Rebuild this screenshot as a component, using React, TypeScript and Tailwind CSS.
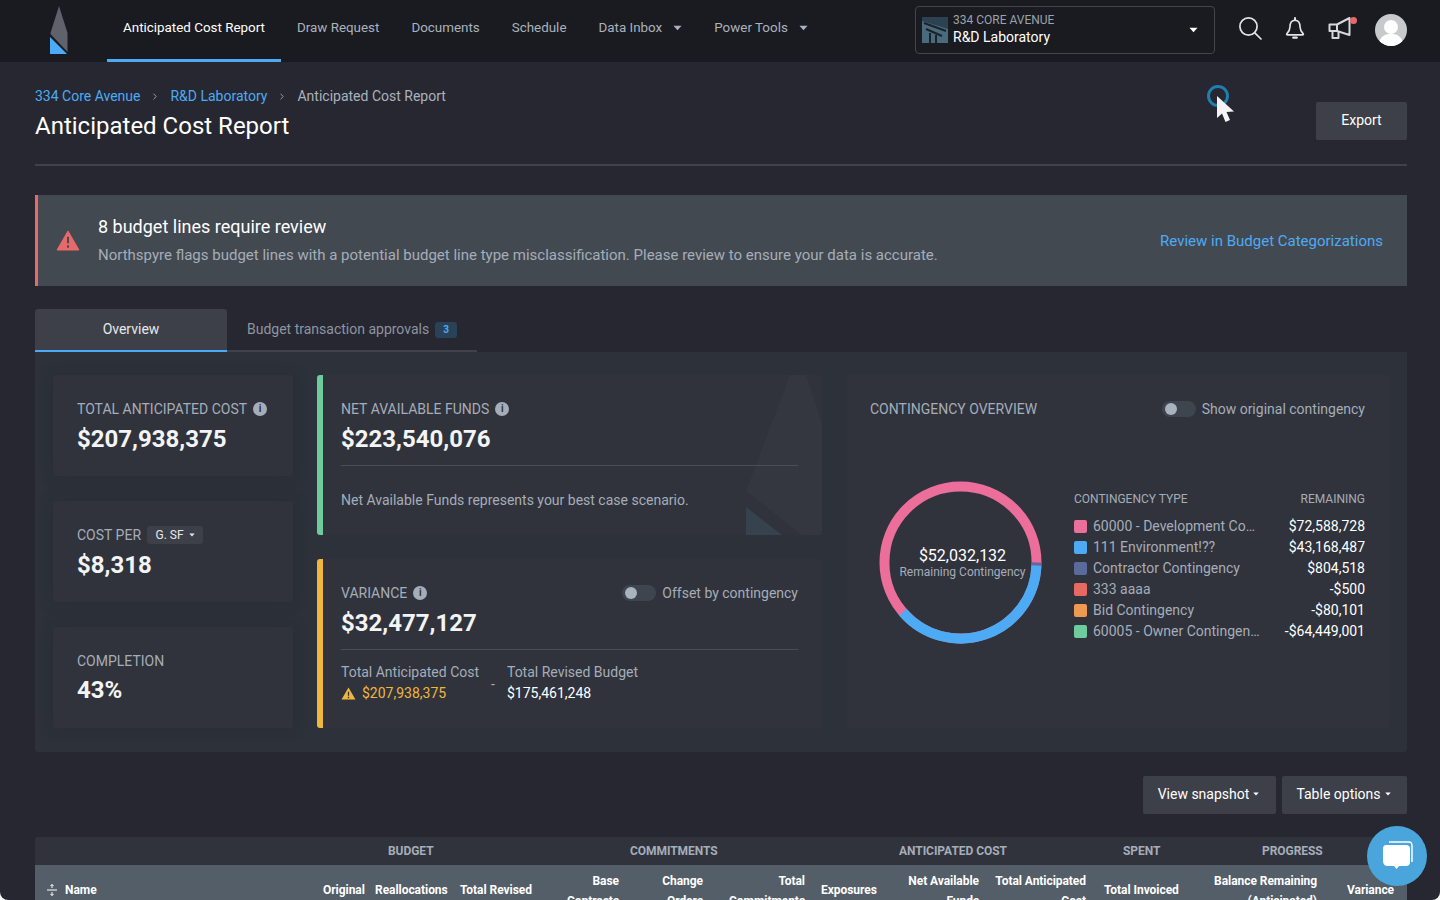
import { ChevronRight } from "lucide-react";

const font = { fontFamily: "Roboto, sans-serif" };

const navItems = ["Draw Request", "Documents", "Schedule"];

const legend = [
  { color: "bg-[#ec6f9b]", name: "60000 - Development Co…", value: "$72,588,728" },
  { color: "bg-[#4dabf5]", name: "111 Environment!??", value: "$43,168,487" },
  { color: "bg-[#5a6a9c]", name: "Contractor Contingency", value: "$804,518" },
  { color: "bg-[#e76a62]", name: "333 aaaa", value: "-$500" },
  { color: "bg-[#ef9a52]", name: "Bid Contingency", value: "-$80,101" },
  { color: "bg-[#6dcb9c]", name: "60005 - Owner Contingen…", value: "-$64,449,001" },
];

function Caret({ className }: { className: string }) {
  return (
    <svg viewBox="0 0 10 6" className={className} fill="currentColor">
      <path d="M0.5 0.5h9L5 5.5z" />
    </svg>
  );
}

function InfoDot() {
  return (
    <span className="ml-[6px] flex h-[14px] w-[14px] items-center justify-center rounded-full bg-[#a5adb9] text-[10px] font-bold leading-none text-[#30333c]">
      i
    </span>
  );
}

function Toggle() {
  return (
    <span className="flex h-[16px] w-[34px] items-center rounded-full bg-[#3f454e] pl-[3px]">
      <span className="h-[12px] w-[12px] rounded-full bg-[#a9b2bf]" />
    </span>
  );
}

function StatCard({ children }: { children: React.ReactNode }) {
  return (
    <div className="h-[101px] rounded-[3px] bg-[#30333c] px-[24px] pt-[25px] shadow-[0_0_14px_rgba(38,39,48,0.45)]">
      {children}
    </div>
  );
}

function Logo() {
  return (
    <svg viewBox="0 0 18 48" className="h-[48px] w-[18px]">
      <path d="M9 0 L17.5 27 L17.5 46 L0.5 28 L0.5 27 Z" fill="#5f626b" />
      <path d="M0 31 L17 48 L0 48 Z" fill="#4dabf5" />
    </svg>
  );
}

function Cursor() {
  return (
    <div className="absolute left-[1207px] top-[85px] h-[40px] w-[32px]">
      <span className="absolute left-0 top-0 h-[22px] w-[22px] rounded-full border-[3px] border-[#1f7fae]" />
      <svg viewBox="0 0 20 30" className="absolute left-[9px] top-[10px] h-[30px] w-[20px]">
        <path d="M1 1 L1 23 L6 18.5 L9.5 27 L14 25 L10.5 17 L18 16.5 Z" fill="#f4f4f4" />
      </svg>
    </div>
  );
}

function HeaderCell({ top, bottom, className }: { top: string; bottom?: string; className: string }) {
  return (
    <div className={`absolute text-right text-[12px] font-bold leading-[20px] tracking-[-0.05px] text-white ${className}`}>
      <div>{top}</div>
      {bottom && <div>{bottom}</div>}
    </div>
  );
}

export default function App() {
  return (
    <div style={font} className="relative h-[900px] overflow-hidden rounded-b-[8px] bg-[#262730] text-[14px] text-white">
      <header className="flex h-[62px] items-stretch bg-[#1a1b20]">
        <div className="ml-[50px] mr-[39px] flex items-center pb-[2px]">
          <Logo />
        </div>
        <nav className="flex w-[718px] items-stretch whitespace-nowrap text-[13.4px] text-[#aab2bd]">
          <a className="flex items-center border-b-[3px] border-[#4dabf5] px-[16px] pb-[3px] text-white">Anticipated Cost Report</a>
          {navItems.map((n) => (
            <a key={n} className="flex items-center px-[16px] pb-[6px]">
              {n}
            </a>
          ))}
          <a className="flex items-center gap-[11px] px-[16px] pb-[6px]">
            Data Inbox <Caret className="h-[6px] w-[9px]" />
          </a>
          <a className="flex items-center gap-[11px] px-[16px] pb-[6px]">
            Power Tools <Caret className="h-[6px] w-[9px]" />
          </a>
        </nav>
        <div className="ml-[90px] mt-[6px] flex h-[48px] w-[300px] items-center rounded-[4px] border border-[#42454d] pl-[6px] pr-[16px]">
          <svg viewBox="0 0 26 26" className="mr-[5px] h-[26px] w-[26px]">
            <rect width="26" height="26" fill="#2c4252" />
            <path d="M0 4 L26 12 L26 26 L0 26 Z" fill="#4a6a7e" />
            <path d="M2 6 L24 14 M4 12 L20 19 M8 16 V26 M14 18 V26" stroke="#1a2228" strokeWidth="2" />
          </svg>
          <div className="-mt-[2px] flex-1">
            <div className="text-[12px] leading-[17px] text-[#9aa2ad]">334 CORE AVENUE</div>
            <div className="text-[14px] leading-[17px] text-white">R&amp;D Laboratory</div>
          </div>
          <Caret className="h-[6px] w-[9px]" />
        </div>
        <div className="ml-[23px] flex items-center pb-[6px]">
          <svg viewBox="0 0 24 24" className="h-[24px] w-[24px]" fill="none" stroke="#e2e4e7" strokeWidth="1.7" strokeLinecap="round">
            <circle cx="10.5" cy="10.5" r="8.6" />
            <path d="M16.8 16.8 L23 23" />
          </svg>
          <svg viewBox="0 0 24 24" className="ml-[22px] h-[24px] w-[22px]" fill="none" stroke="#e2e4e7" strokeWidth="1.8" strokeLinejoin="round">
            <path d="M12 3.5 C7.5 3.5 6.5 7.5 6.5 11 C6.5 14.5 5 16.5 3 18.5 Q2.5 19.5 4 19.5 H20 Q21.5 19.5 21 18.5 C19 16.5 17.5 14.5 17.5 11 C17.5 7.5 16.5 3.5 12 3.5 Z" />
            <path d="M12 1 V3.5 M10 22.5 H14" strokeLinecap="round" strokeWidth="2.2" />
          </svg>
          <div className="relative ml-[22px] h-[24px] w-[26px]">
            <svg viewBox="0 0 26 24" className="h-[24px] w-[26px]" fill="none" stroke="#d5d8dc" strokeWidth="2" strokeLinejoin="round">
              <path d="M1.5 8.5 H9 L21.5 2 V19 L9 15 H1.5 Z" />
              <path d="M9 8.5 V15 M4.5 15 V22 H10.5 V15.5" />
            </svg>
            <span className="absolute right-[-3px] top-[1px] h-[7px] w-[7px] rounded-full bg-[#e76a6a]" />
          </div>
          <div className="relative ml-[21px] mt-[4px] h-[32px] w-[32px] overflow-hidden rounded-full bg-[#c8c9cb]">
            <span className="absolute left-[9px] top-[6px] h-[14px] w-[14px] rounded-full bg-white" />
            <span className="absolute left-[4px] top-[20px] h-[18px] w-[24px] rounded-t-[10px] bg-white" />
          </div>
        </div>
      </header>

      <main className="pl-[35px] pr-[33px]">
        <div className="flex h-[104px] items-start justify-between border-b-2 border-[#3f424a]">
          <div>
            <div className="mt-[25px] flex items-center text-[14px] leading-[18px] text-[#aab2bd]">
              <a className="text-[#4dabf5]">334 Core Avenue</a>
              <ChevronRight className="mx-[10px] h-[13px] w-[10px] text-[#aab2bd]" strokeWidth={2} />
              <a className="text-[#4dabf5]">R&amp;D Laboratory</a>
              <ChevronRight className="mx-[10px] h-[13px] w-[10px] text-[#aab2bd]" strokeWidth={2} />
              <span>Anticipated Cost Report</span>
            </div>
            <h1 className="mt-[6px] text-[24px] font-normal leading-[30px] text-white">Anticipated Cost Report</h1>
          </div>
          <button className="mt-[40px] h-[38px] w-[91px] rounded-[2px] bg-[#3d4049] pb-[2px] text-[14px]">Export</button>
        </div>

        <section className="mt-[29px] flex h-[91px] items-center justify-between border-l-[3px] border-[#e76a6a] bg-[#434951] pl-[18px] pr-[24px]">
          <div className="flex items-center">
            <svg viewBox="0 0 24 22" className="h-[21px] w-[24px]">
              <path d="M12 1 L23.5 21 H0.5 Z" fill="#e76a6a" stroke="#e76a6a" strokeWidth="1" strokeLinejoin="round" />
              <path d="M12 7 V14 M12 16 V18.5" stroke="#434951" strokeWidth="2" />
            </svg>
            <div className="ml-[18px]">
              <div className="text-[18px] leading-[22px] text-white">8 budget lines require review</div>
              <div className="mt-[7px] text-[15px] leading-[20px] text-[#a5adb9]">
                Northspyre flags budget lines with a potential budget line type misclassification. Please review to ensure your data is accurate.
              </div>
            </div>
          </div>
          <a className="mt-[2px] text-[15px] text-[#4dabf5]">Review in Budget Categorizations</a>
        </section>

        <div className="mt-[23px] flex h-[43px] w-[442px] border-b-2 border-[#3f424a] text-[14px]">
          <div className="flex h-[43px] w-[192px] items-center justify-center rounded-t-[3px] border-b-2 border-[#4dabf5] bg-[#3d4049] text-[#e6e8eb]">
            Overview
          </div>
          <div className="flex flex-1 items-center pl-[20px] text-[#8d95a1]">
            Budget transaction approvals
            <span className="ml-[6px] flex h-[16px] w-[22px] items-center justify-center rounded-[3px] bg-[#2a4257] text-[10px] font-bold text-[#4dabf5]">3</span>
          </div>
        </div>

        <section className="flex h-[400px] gap-[24px] rounded-b-[3px] bg-[#2c313a] px-[18px] pt-[23px]">
          <div className="flex w-[240px] flex-col gap-[25px]">
            <StatCard>
              <div className="flex h-[18px] items-center text-[#a5adb9]">
                TOTAL ANTICIPATED COST <InfoDot />
              </div>
              <div className="mt-[6px] text-[24px] font-bold leading-[30px] text-[#f3f4f5]">$207,938,375</div>
            </StatCard>
            <StatCard>
              <div className="flex h-[18px] items-center text-[#a5adb9]">
                COST PER
                <span className="ml-[6px] flex h-[18px] w-[56px] items-center justify-center gap-[5px] rounded-[3px] bg-[#3d4049] text-[12px] text-[#e6e8eb]">
                  G. SF <Caret className="h-[4px] w-[6px]" />
                </span>
              </div>
              <div className="mt-[6px] text-[24px] font-bold leading-[30px] text-[#f3f4f5]">$8,318</div>
            </StatCard>
            <StatCard>
              <div className="flex h-[18px] items-center text-[#a5adb9]">COMPLETION</div>
              <div className="mt-[5px] text-[24px] font-bold leading-[30px] text-[#f3f4f5]">43%</div>
            </StatCard>
          </div>

          <div className="flex h-[353px] w-[505px] flex-col gap-[24px]">
            <div className="relative h-[160px] overflow-hidden rounded-[3px] border-l-[6px] border-[#6dcb9c] bg-[#30333c] pl-[18px] pr-[24px] pt-[25px]">
              <svg viewBox="0 0 78 160" className="absolute bottom-0 right-0 h-[160px] w-[78px]">
                <path d="M46 0 L62 0 L78 48 L78 160 L58 160 L2 116 Z" fill="#34373f" />
                <path d="M2 132 L38 160 L2 160 Z" fill="#36424d" />
              </svg>
              <div className="relative">
                <div className="flex h-[18px] items-center text-[#a5adb9]">
                  NET AVAILABLE FUNDS <InfoDot />
                </div>
                <div className="mt-[6px] border-b border-[#4a4d57] pb-[11px] text-[24px] font-bold leading-[30px] text-[#f3f4f5]">$223,540,076</div>
                <div className="mt-[24px] text-[14px] leading-[20px] text-[#a5adb9]">Net Available Funds represents your best case scenario.</div>
              </div>
            </div>
            <div className="h-[169px] rounded-[3px] border-l-[6px] border-[#f0b73d] bg-[#30333c] pl-[18px] pr-[24px] pt-[25px]">
              <div className="flex h-[18px] items-center justify-between text-[#a5adb9]">
                <div className="flex items-center">
                  VARIANCE <InfoDot />
                </div>
                <div className="flex items-center gap-[6px]">
                  <Toggle /> Offset by contingency
                </div>
              </div>
              <div className="mt-[6px] border-b border-[#4a4d57] pb-[11px] text-[24px] font-bold leading-[30px] text-[#f3f4f5]">$32,477,127</div>
              <div className="mt-[12px] flex leading-[20px]">
                <div>
                  <div className="text-[#a5adb9]">Total Anticipated Cost</div>
                  <div className="mt-[1px] flex items-center text-[#f0b73d]">
                    <svg viewBox="0 0 16 14" className="mr-[6px] h-[13px] w-[15px]">
                      <path d="M8 0.5 L15.5 13.5 H0.5 Z" fill="#f0b73d" />
                      <path d="M8 5 V9.5 M8 10.5 V12" stroke="#30333c" strokeWidth="1.4" />
                    </svg>
                    $207,938,375
                  </div>
                </div>
                <div className="mx-[12px] self-center pt-[2px] text-[#a5adb9]">-</div>
                <div>
                  <div className="text-[#a5adb9]">Total Revised Budget</div>
                  <div className="mt-[1px] text-white">$175,461,248</div>
                </div>
              </div>
            </div>
          </div>

          <div className="h-[353px] w-[543px] rounded-[3px] bg-[#30333c] px-[24px] pt-[25px]">
            <div className="flex h-[18px] items-center justify-between text-[#a5adb9]">
              <span>CONTINGENCY OVERVIEW</span>
              <div className="flex items-center gap-[6px]">
                <Toggle /> Show original contingency
              </div>
            </div>
            <div className="mt-[63px] flex items-start">
              <div className="relative ml-[9px] h-[163px] w-[163px] shrink-0">
                <svg viewBox="0 0 164 164" className="h-[163px] w-[163px]">
                  <circle cx="82" cy="82" r="76.5" fill="none" stroke="#ec6f9b" strokeWidth="10" />
                  <path d="M158.4 85 A76.5 76.5 0 0 1 24 132" fill="none" stroke="#4dabf5" strokeWidth="10" />
                  <path d="M158.5 82 L158.4 85" fill="none" stroke="#5a6a9c" strokeWidth="10" />
                </svg>
                <div className="absolute inset-0 flex flex-col items-center justify-center pl-[4px] text-center">
                  <div className="text-[16px] leading-[18px] text-white">$52,032,132</div>
                  <div className="text-[12px] leading-[14px] text-[#a5adb9]">Remaining Contingency</div>
                </div>
              </div>
              <div className="ml-[32px] mt-[10px] flex-1">
                <div className="mb-[9px] flex justify-between text-[12px] leading-[16px] text-[#a5adb9]">
                  <span>CONTINGENCY TYPE</span>
                  <span>REMAINING</span>
                </div>
                {legend.map((l) => (
                  <div key={l.name} className="flex h-[21px] items-center justify-between">
                    <div className="flex items-center text-[#a5adb9]">
                      <span className={`mr-[6px] h-[13px] w-[13px] rounded-[2px] ${l.color}`} />
                      {l.name}
                    </div>
                    <span className="text-white">{l.value}</span>
                  </div>
                ))}
              </div>
            </div>
          </div>
        </section>

        <div className="mt-[24px] flex justify-end gap-[6px] text-[14px]">
          <button className="flex h-[38px] w-[133px] items-center justify-center gap-[4px] rounded-[2px] bg-[#3d4049] pb-[2px] pr-[2px]">
            View snapshot <Caret className="h-[4px] w-[6px]" />
          </button>
          <button className="flex h-[38px] w-[125px] items-center justify-center gap-[4px] rounded-[2px] bg-[#3d4049] pb-[2px] pr-[2px]">
            Table options <Caret className="h-[4px] w-[6px]" />
          </button>
        </div>

        <div className="mt-[23px] flex h-[28px] rounded-t-[3px] bg-[#30333c] text-[12px] font-bold tracking-[-0.05px] text-[#a5adb9]">
          <div className="relative h-full w-full leading-[29px]">
            <span className="absolute left-[353px]">BUDGET</span>
            <span className="absolute left-[595px]">COMMITMENTS</span>
            <span className="absolute left-[864px]">ANTICIPATED COST</span>
            <span className="absolute left-[1088px]">SPENT</span>
            <span className="absolute left-[1227px]">PROGRESS</span>
          </div>
        </div>
        <div className="relative h-[60px] bg-[#545e69]">
          <div className="absolute left-[12px] top-[15px] flex items-center text-[12px] font-bold leading-[20px] tracking-[-0.05px]">
            <svg viewBox="0 0 10 12" className="mr-[8px] h-[12px] w-[10px]" fill="none" stroke="white" strokeWidth="1">
              <path d="M0 6 H10 M5 0.5 V4 M5 8 V11.5 M3.5 2 L5 0.5 L6.5 2 M3.5 10 L5 11.5 L6.5 10" />
            </svg>
            Name
          </div>
          <HeaderCell top="Original" className="left-[288px] top-[15px]" />
          <HeaderCell top="Reallocations" className="left-[340px] top-[15px]" />
          <HeaderCell top="Total Revised" className="left-[425px] top-[15px]" />
          <HeaderCell top="Base" bottom="Contracts" className="right-[788px] top-[6px]" />
          <HeaderCell top="Change" bottom="Orders" className="right-[704px] top-[6px]" />
          <HeaderCell top="Total" bottom="Commitments" className="right-[602px] top-[6px]" />
          <HeaderCell top="Exposures" className="left-[786px] top-[15px]" />
          <HeaderCell top="Net Available" bottom="Funds" className="right-[428px] top-[6px]" />
          <HeaderCell top="Total Anticipated" bottom="Cost" className="right-[321px] top-[6px]" />
          <HeaderCell top="Total Invoiced" className="left-[1069px] top-[15px]" />
          <HeaderCell top="Balance Remaining" bottom="(Anticipated)" className="right-[90px] top-[6px]" />
          <HeaderCell top="Variance" className="left-[1312px] top-[15px]" />
        </div>
      </main>

      <Cursor />

      <div className="absolute left-[1367px] top-[826px] flex h-[60px] w-[60px] items-center justify-center rounded-full bg-[#4aa5dc]">
        <svg viewBox="0 0 32 32" className="h-[32px] w-[32px]">
          <path d="M8 2 H28 Q31 2 31 6 V22" fill="none" stroke="white" strokeWidth="1.5" />
          <path d="M5 5 H25 Q29 5 29 9 V22 Q29 26 25 26 H18 L15.5 29 L13 26 H7 Q2 26 2 21 V9 Q2 5 5 5 Z" fill="white" />
        </svg>
      </div>
    </div>
  );
}
